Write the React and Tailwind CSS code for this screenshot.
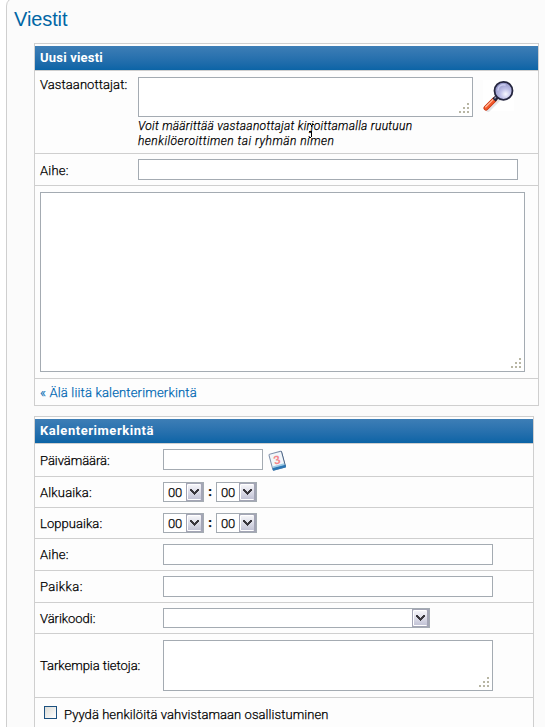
import React from "react";

function Panel({ title, titleClass, className, children }) {
  return (
    <section className={`border border-[#cfcfcf] bg-[#fdfdfd] pt-[2px] ${className}`}>
      <h2 className="flex h-[25px] items-center border-b border-[#cfcfcf] bg-linear-to-b from-[#3d7eb6] to-[#0a64a6] bg-clip-padding pl-[5px] text-[13px] font-bold text-white [-webkit-text-stroke:0]">
        <span className={titleClass}>{title}</span>
      </h2>
      {children}
    </section>
  );
}

function Row({ label, className, labelClass, labelWidth = "w-[123px]", children }) {
  return (
    <div className={`flex items-start border-b border-[#cfcfcf] pl-[5px] ${className}`}>
      <label className={`shrink-0 leading-4 ${labelWidth}`}>
        <span className={labelClass}>{label}</span>
      </label>
      {children}
    </div>
  );
}

function Grip() {
  return (
    <svg width="10" height="10" viewBox="0 0 10 10" fill="#b8b6a4" shapeRendering="crispEdges">
      <path d="M8 0h2v2H8zM4 4h2v2H4zM8 4h2v2H8zM0 8h2v2H0zM4 8h2v2H4zM8 8h2v2H8z" />
    </svg>
  );
}

function Area({ className }) {
  return (
    <div className={`flex shrink-0 items-end justify-end border border-[#a4abb2] bg-white pr-[3px] pb-[3px] ${className}`}>
      <Grip />
    </div>
  );
}

function Field({ className }) {
  return <div className={`h-[21px] shrink-0 border border-[#a4abb2] bg-white ${className}`} />;
}

function Select({ value, className }) {
  return (
    <div className={`flex h-5 shrink-0 justify-between border border-[#a4abb2] bg-white ${className}`}>
      <span className="pl-1 leading-[20px] tracking-[-0.2px]">{value}</span>
      <svg width="17" height="18" viewBox="0 0 17 18">
        <defs>
          <linearGradient id="btn" x1="0" y1="0" x2="0" y2="1">
            <stop offset="0" stopColor="#f5f5f9" />
            <stop offset="1" stopColor="#c3c4d6" />
          </linearGradient>
        </defs>
        <rect width="17" height="18" fill="#a3a5b5" />
        <rect x="1" y="1" width="14" height="16" rx="1" fill="#fff" />
        <rect x="2" y="2" width="13" height="14" fill="url(#btn)" />
        <path
          fill="#39373d"
          shapeRendering="crispEdges"
          d="M4 6h2v1h1v1h1v1h1v-1h1v-1h1v-1h2v2h-1v1h-1v1h-1v1h-1v1h-1v-1h-1v-1h-1v-1h-1v-1h-1z"
        />
      </svg>
    </div>
  );
}

function Magnifier() {
  return (
    <svg width="32" height="32" viewBox="0 0 32 32" className="ml-[10px] mt-[3px] shrink-0">
      <defs>
        <radialGradient id="lens" cx="0.62" cy="0.68" r="0.75">
          <stop offset="0" stopColor="#f7f8ff" />
          <stop offset="0.4" stopColor="#bfc0e8" />
          <stop offset="1" stopColor="#8587bd" />
        </radialGradient>
      </defs>
      <rect width="31" height="31" fill="#fff" />
      <path d="M5 30L15 20" stroke="#e3e3e6" strokeWidth="4" strokeLinecap="round" />
      <path d="M3 28L11.5 19.5" stroke="#c8330f" strokeWidth="5" strokeLinecap="round" />
      <path d="M3 28L11.5 19.5" stroke="#f4592a" strokeWidth="3.4" strokeLinecap="round" />
      <path d="M2.6 27L10.8 18.8" stroke="#ffc0a4" strokeWidth="1.1" strokeLinecap="round" />
      <path d="M11 20L15 16" stroke="#24243b" strokeWidth="4.4" />
      <path d="M11.5 18.5L14 16" stroke="#9fa1bd" strokeWidth="1.2" />
      <circle cx="20.5" cy="10.8" r="9" fill="url(#lens)" stroke="#25263f" strokeWidth="1.8" />
      <path d="M15 10c0-4 4-6 7-5" stroke="#c9cbee" strokeWidth="1.6" fill="none" strokeLinecap="round" />
    </svg>
  );
}

function CalendarIcon() {
  return (
    <svg width="20" height="21" viewBox="0 0 20 21" className="ml-[4px] mt-[1px] shrink-0">
      <g transform="rotate(-15 10 10)">
        <rect x="3" y="2" width="14" height="17.5" rx="1.5" fill="#7d8ea8" />
        <path d="M16 2.5a1.5 1.5 0 0 1 1 1.5v14l-1 1.5z" fill="#4c6585" />
        <rect x="3.5" y="16.5" width="13.5" height="3" rx="1" fill="#2c76b4" />
        <rect x="4" y="3" width="12" height="13" fill="#f2f6fa" />
        <rect x="4" y="15" width="12" height="1.8" fill="#9ccbe8" />
        <text x="10" y="14" textAnchor="middle" fontSize="12" fontWeight="bold" fontFamily="Liberation Sans, sans-serif" fill="#f4888b" className="[-webkit-text-stroke:0]">
          3
        </text>
      </g>
    </svg>
  );
}

function TimeRow({ label, className, labelClass }) {
  return (
    <Row label={label} className={className} labelClass={labelClass}>
      <Select value="00" className="w-[41px]" />
      <span className="w-3 text-center font-bold leading-[20px]">:</span>
      <Select value="00" className="w-[41px]" />
    </Row>
  );
}

export default function App() {
  return (
    <div className="h-[727px] w-[545px] overflow-hidden bg-white pl-[6px] font-['Roboto',sans-serif] text-[13px] font-light text-black [-webkit-text-stroke:0.25px]">
      <main className="relative -mt-[3px] h-[760px] w-[560px] rounded-tl-[9px] border border-[#cfcfcf] bg-[#fbfbfb] pl-[7px]">
        <h1 className="h-[45px] pt-[9px] font-['Liberation_Sans',sans-serif] text-[20px] font-normal leading-6 text-[#0066a5] [-webkit-text-stroke:0]">
          <span className="tracking-[-0.1px]">Viestit</span>
        </h1>

        <Panel title="Uusi viesti" titleClass="tracking-[0.2px]" className="ml-5 w-[505px]">
          <Row label="Vastaanottajat:" labelWidth="w-[98px]" className="h-[83px] pt-[6px]" labelClass="tracking-[0.08px]">
            <div className="w-[335px]">
              <Area className="h-10 w-[335px]" />
              <p className="relative mt-[2px] whitespace-nowrap text-[12px] italic leading-[15px]">
                <span className="tracking-[0.29px]">Voit määrittää vastaanottajat kirjoittamalla ruutuun</span>
                <br />
                <span className="tracking-[0.48px]">henkilöeroittimen tai ryhmän nimen</span>
                <svg width="6" height="15" viewBox="0 0 6 15" className="absolute left-[171px] top-[4px]" fill="none" stroke="#000" shapeRendering="crispEdges">
                  <path d="M1 1.5h1M3 1.5h2M2.5 2v2M0 8.5h3M2.5 8v6M0 14.5h2" />
                </svg>
              </p>
            </div>
            <Magnifier />
          </Row>
          <Row label="Aihe:" labelWidth="w-[98px]" className="h-8 pt-[5px]" labelClass="relative top-[4px] tracking-[0.2px]">
            <Field className="w-[380px]" />
          </Row>
          <div className="h-[193px] border-b border-[#cfcfcf] pl-[5px] pt-[6px]">
            <Area className="h-[180px] w-[485px]" />
          </div>
          <div className="flex h-[26px] items-center pl-[5px] pt-[2px] text-[#0068b3]">
            <a className="tracking-[0.17px]">« Älä liitä kalenterimerkintä</a>
          </div>
        </Panel>

        <Panel title="Kalenterimerkintä" titleClass="tracking-[0.55px]" className="ml-5 mt-[10px] h-[330px] w-[500px]">
          <Row label="Päivämäärä:" className="h-[33px] pt-[5px]" labelClass="relative top-[4px] tracking-[-0.05px]">
            <Field className="w-[100px]" />
            <CalendarIcon />
          </Row>
          <TimeRow label="Alkuaika:" className="h-[31px] pt-[5px]" labelClass="relative top-[3px] tracking-[0.15px]" />
          <TimeRow label="Loppuaika:" className="h-[31px] pt-[5px]" labelClass="relative top-[3px] tracking-[0.05px]" />
          <Row label="Aihe:" className="h-8 pt-[5px]" labelClass="relative top-[3px] tracking-[0.2px]">
            <Field className="w-[330px]" />
          </Row>
          <Row label="Paikka:" className="h-8 pt-[5px]" labelClass="relative top-[3px] tracking-[0.35px]">
            <Field className="w-[330px]" />
          </Row>
          <Row label="Värikoodi:" className="h-[31px] pt-[5px]" labelClass="relative top-[3px] tracking-[-0.05px]">
            <Select value="" className="w-[267px]" />
          </Row>
          <Row label="Tarkempia tietoja:" className="h-16 pt-[6px]" labelClass="relative top-[18px] tracking-[-0.04px]">
            <Area className="h-[51px] w-[330px]" />
          </Row>
          <div className="flex items-start pl-[9px] pt-[8px]">
            <span className="size-[13px] shrink-0 border border-[#1c5180] bg-linear-to-br from-[#dcdcd7] to-white" />
            <label className="ml-[7px] mt-px leading-4">
              <span className="tracking-[0.07px]">Pyydä henkilöitä vahvistamaan osallistuminen</span>
            </label>
          </div>
        </Panel>
      </main>
    </div>
  );
}
